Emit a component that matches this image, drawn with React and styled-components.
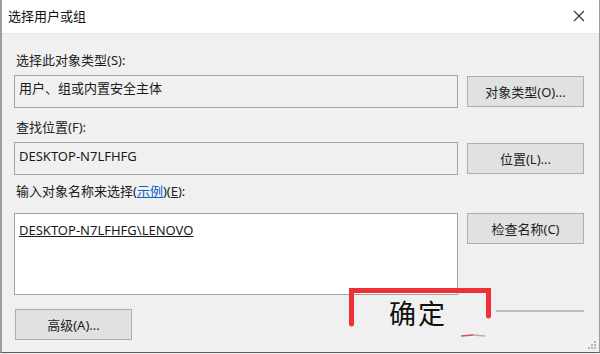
import React from "react";
import styled, { createGlobalStyle } from "styled-components";

const GlobalStyle = createGlobalStyle`
  html, body {
    margin: 0;
    padding: 0;
    background: #f0f0f0;
  }
  body {
    font-family: "Noto Sans", "Noto Sans CJK SC", sans-serif;
    color: #1a1a1a;
  }
`;

const Window = styled.div`
  position: relative;
  width: 600px;
  height: 353px;
  box-sizing: border-box;
  background: #f0f0f0;
  border-left: 2px solid #9c9c9c;
  border-right: 1px solid #9c9c9c;
  border-bottom: 1px solid #5a5a5a;
  overflow: hidden;
  display: flex;
  flex-direction: column;
`;

const TitleBar = styled.div`
  height: 31px;
  flex: none;
  background: #ffffff;
  display: flex;
  align-items: center;
  justify-content: space-between;
  padding: 0 14px 2px 6px;
  border-bottom: 1px solid #e6e6e6;
`;

const Title = styled.span`
  font-size: 13px;
  color: #111;
`;

const Body = styled.div`
  flex: 1;
  padding: 18px 14px 0 12px;
  display: flex;
  flex-direction: column;
`;

const Label = styled.div`
  font-size: 13px;
  line-height: 16px;
  color: #222;
  margin: ${(p) => p.$top || 0}px 0 ${(p) => p.$gap || 7}px 2px;
`;

const Link = styled.span`
  color: #0a64c8;
  text-decoration: underline;
`;

const Under = styled.span`
  text-decoration: underline;
`;

const Row = styled.div`
  display: grid;
  grid-template-columns: 444px 117px;
  column-gap: 9px;
  align-items: ${(p) => (p.$top ? "start" : "center")};
`;

const Field = styled.div`
  box-sizing: border-box;
  height: ${(p) => p.$h || 33}px;
  border: 1px solid #a3a3a3;
  background: ${(p) => (p.$white ? "#ffffff" : "#f0f0f0")};
  padding: ${(p) => p.$pt || 4}px 4px 0 4px;
  font-size: 13px;
  line-height: 16px;
  color: #1a1a1a;
`;

const Button = styled.div`
  box-sizing: border-box;
  height: 31px;
  width: ${(p) => p.$w || 117}px;
  background: #e1e1e1;
  border: 1px solid #adadad;
  display: flex;
  align-items: center;
  justify-content: center;
  font-size: 13px;
  color: #222;
`;

const Footer = styled.div`
  position: relative;
  margin-top: 14px;
  height: 42px;
  display: flex;
  align-items: flex-start;
  padding-left: 1px;
`;

const CancelEdge = styled.div`
  position: absolute;
  left: 482px;
  top: 1px;
  width: 88px;
  border-top: 2px solid #bdbdbd;
`;

const Annotation = styled.div`
  position: absolute;
  left: 335px;
  top: -21px;
  width: 144px;
  height: 52px;
`;

const OkText = styled.div`
  position: absolute;
  left: 40px;
  top: 9px;
  font-family: "Noto Sans CJK SC", sans-serif;
  font-size: 27px;
  line-height: 32px;
  letter-spacing: 2px;
  color: #111;
`;

const Grip = styled.svg`
  position: absolute;
  right: 2px;
  bottom: 2px;
`;

const CloseIcon = () => (
  <svg width="12" height="12" viewBox="0 0 12 12">
    <path d="M1 1 L11 11 M11 1 L1 11" stroke="#333" strokeWidth="1.1" />
  </svg>
);

export default function App() {
  return (
    <>
      <GlobalStyle />
      <Window>
        <TitleBar>
          <Title>选择用户或组</Title>
          <CloseIcon />
        </TitleBar>
        <Body>
          <Label>选择此对象类型(S):</Label>
          <Row>
            <Field>用户、组或内置安全主体</Field>
            <Button>对象类型(O)...</Button>
          </Row>

          <Label $top={11}>查找位置(F):</Label>
          <Row>
            <Field $pt={5}>DESKTOP-N7LFHFG</Field>
            <Button>位置(L)...</Button>
          </Row>

          <Label $top={8} $gap={14}>
            输入对象名称来选择(<Link>示例</Link>)(<Under>E</Under>):
          </Label>
          <Row $top>
            <Field $white $h={82} $pt={8}>
              <Under>DESKTOP-N7LFHFG\LENOVO</Under>
            </Field>
            <Button>检查名称(C)</Button>
          </Row>

          <Footer>
            <Button>高级(A)...</Button>
            <CancelEdge />
            <Annotation>
              <svg width="144" height="52" viewBox="0 0 144 52">
                <path d="M2.5 36 L2.5 2.5 L139.5 2.5 L139.5 28" fill="none" stroke="#ee3038" strokeWidth="5" strokeLinecap="round" />
                <path d="M112 48 L124 47" stroke="#e24a50" strokeWidth="1.5" />
                <path d="M124 47 L136 48" stroke="#b0b0b0" strokeWidth="1.5" />
              </svg>
              <OkText>确定</OkText>
            </Annotation>
          </Footer>
        </Body>
        <Grip width="10" height="10" viewBox="0 0 10 10">
          <g fill="#b5b5b5">
            <rect x="7" y="1" width="2" height="2" />
            <rect x="4" y="4" width="2" height="2" />
            <rect x="7" y="4" width="2" height="2" />
            <rect x="1" y="7" width="2" height="2" />
            <rect x="4" y="7" width="2" height="2" />
            <rect x="7" y="7" width="2" height="2" />
          </g>
        </Grip>
      </Window>
    </>
  );
}
